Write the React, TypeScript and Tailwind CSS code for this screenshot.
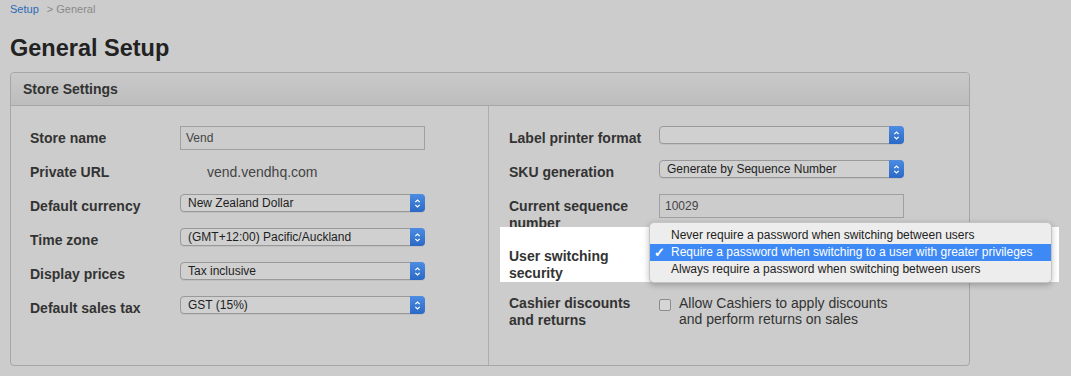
import React from 'react';

function Chevrons() {
  return (
    <svg width="7" height="11" viewBox="0 0 7 11" fill="none">
      <path d="M1.3 4.2 L3.5 2 L5.7 4.2" stroke="white" strokeWidth="1.2" />
      <path d="M1.3 6.8 L3.5 9 L5.7 6.8" stroke="white" strokeWidth="1.2" />
    </svg>
  );
}

function Select({ value }: { value?: string }) {
  return (
    <div className="flex h-[18px] w-[245px] items-stretch rounded-[4px] border border-[#999] bg-[#d0d0d0] shadow-[0_1px_0_rgba(0,0,0,0.06)]">
      <span className="flex-1 pl-[7px] text-[12px] leading-[16px] text-[#1e1e1e]">{value}</span>
      <span className="-my-px -mr-px flex w-[15px] items-center justify-center rounded-r-[4px] bg-gradient-to-b from-[#4c8ce2] to-[#2b69c6]">
        <Chevrons />
      </span>
    </div>
  );
}

function TextInput({ value }: { value: string }) {
  return (
    <div className="h-[24px] w-[245px] border border-[#a0a0a0] bg-[#cccccc] pl-[5px] text-[12px] leading-[22px] text-[#444]">
      {value}
    </div>
  );
}

function Row({ label, h = 'h-[34px]', children }: { label: React.ReactNode; h?: string; children?: React.ReactNode }) {
  return (
    <div className={`flex ${h}`}>
      <div className="w-[150px] pt-[4px] text-[14px] font-bold leading-[17px] text-[#333]">{label}</div>
      <div>{children}</div>
    </div>
  );
}

const options = [
  'Never require a password when switching between users',
  'Require a password when switching to a user with greater privileges',
  'Always require a password when switching between users',
];

export default function App() {
  return (
    <div className="h-[376px] w-full bg-[#cccccc] px-[10px] font-['Liberation_Sans',Arial,sans-serif]">
      <div className="text-[11px] leading-[18px]">
        <span className="text-[#2a6ab5]">Setup</span>
        <span className="ml-[8px] text-[#8a8a8a]">&gt; General</span>
      </div>
      <h1 className="mt-[17px] text-[23.5px] font-bold leading-[26px] text-[#222]">General Setup</h1>

      <div className="mt-[11px] w-[960px] rounded-[4px] border border-[#a6a6a6]">
        <div className="flex h-[33px] items-center rounded-t-[4px] border-b border-[#a6a6a6] bg-gradient-to-b from-[#c9c9c9] to-[#bdbdbd] pl-[12px] text-[14px] font-bold text-[#333]">
          Store Settings
        </div>
        <div className="flex h-[259px]">
          <div className="w-[478px] border-r border-[#adadad] pl-[19px] pt-[20px]">
            <Row label="Store name">
              <TextInput value="Vend" />
            </Row>
            <Row label="Private URL">
              <div className="pl-[27px] pt-[4px] text-[14px] leading-[17px] text-[#444]">vend.vendhq.com</div>
            </Row>
            <Row label="Default currency">
              <Select value="New Zealand Dollar" />
            </Row>
            <Row label="Time zone">
              <Select value="(GMT+12:00) Pacific/Auckland" />
            </Row>
            <Row label="Display prices">
              <Select value="Tax inclusive" />
            </Row>
            <Row label="Default sales tax">
              <Select value="GST (15%)" />
            </Row>
          </div>

          <div className="flex-1 pl-[20px] pt-[20px]">
            <Row label="Label printer format">
              <Select />
            </Row>
            <Row label="SKU generation">
              <Select value="Generate by Sequence Number" />
            </Row>
            <Row label={<>Current sequence<br />number</>} h="h-[50px]">
              <TextInput value="10029" />
            </Row>
            <div className="relative">
              <div className="absolute left-[-9px] top-[-17px] h-[55px] w-[559px] bg-white" />
              <div className="relative">
                <Row label={<>User switching<br />security</>} h="h-[47px]" />
              </div>
              <div className="absolute left-[140px] top-[-22px] z-10 w-[403px] rounded-[5px] border border-[#c4c4c4] bg-[#ededed] py-[4px] shadow-[0_2px_6px_rgba(0,0,0,0.25)]">
                {options.map((o, i) => (
                  <div
                    key={o}
                    className={`relative h-[17px] pl-[21px] text-[12px] leading-[17px] ${
                      i === 1 ? 'bg-[#3d89f5] text-white' : 'text-[#222]'
                    }`}
                  >
                    {i === 1 && <span className="absolute left-[4px] top-0 text-[13px] font-bold">✓</span>}
                    {o}
                  </div>
                ))}
              </div>
            </div>
            <Row label={<>Cashier discounts<br />and returns</>} h="h-[50px]">
              <div className="flex">
                <div className="mt-[8px] h-[12px] w-[12px] rounded-[2px] border border-[#8c8c8c] bg-[#d6d6d6]" />
                <div className="ml-[8px] pt-[4px] text-[14px] leading-[16px] text-[#333]">
                  Allow Cashiers to apply discounts
                  <br />
                  and perform returns on sales
                </div>
              </div>
            </Row>
          </div>
        </div>
      </div>
    </div>
  );
}
